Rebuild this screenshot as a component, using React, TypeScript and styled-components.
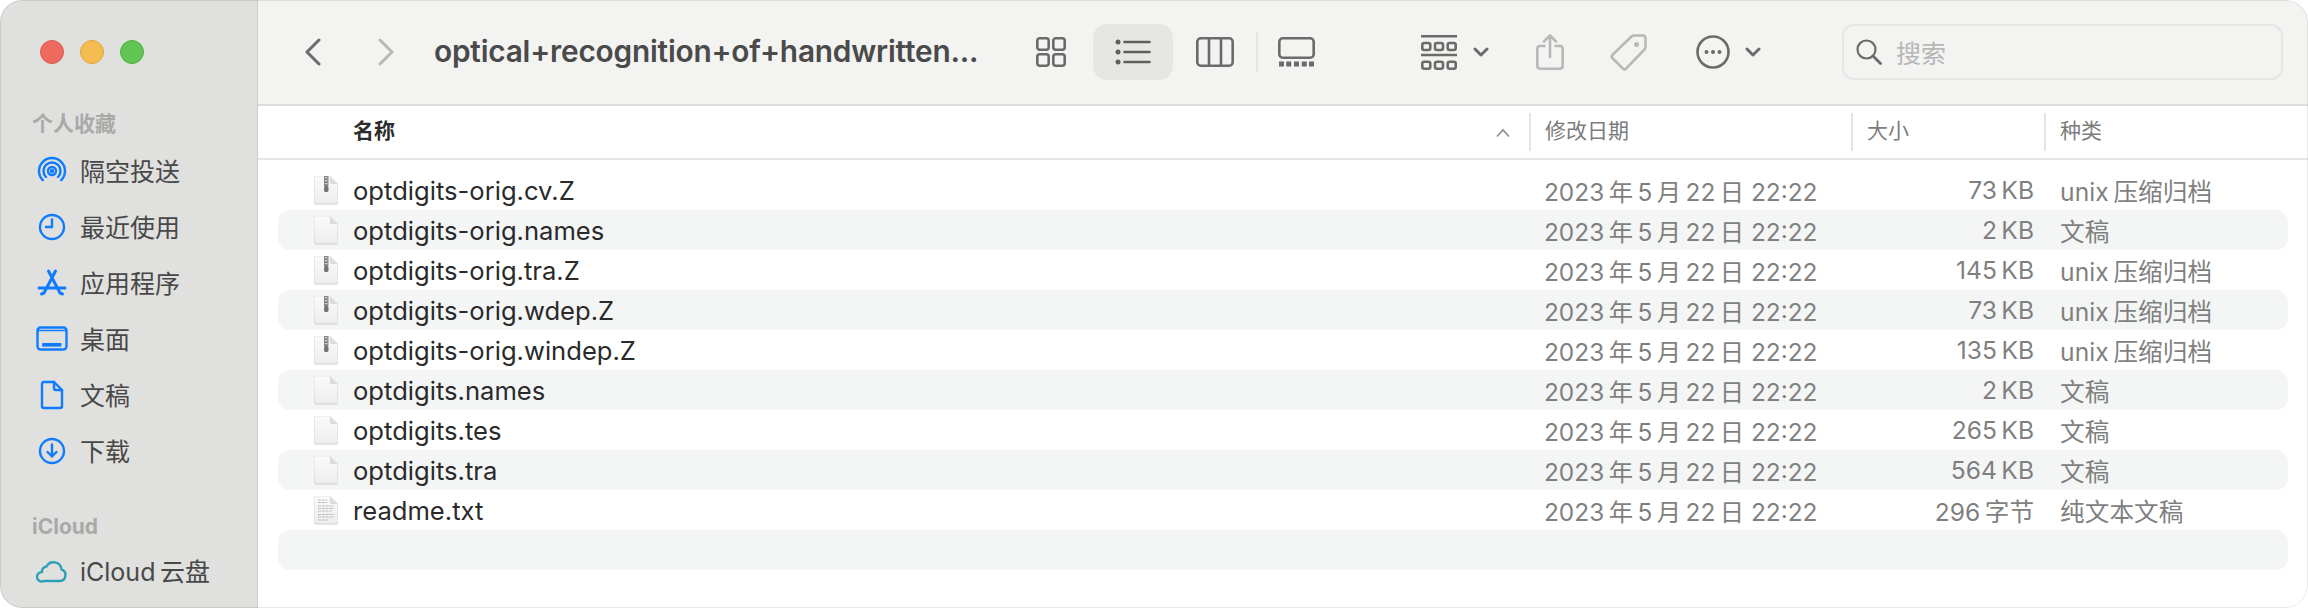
import React, { FunctionComponent, useId } from 'react';
import styled, { createGlobalStyle } from 'styled-components';

const latin = `Inter, 'Noto Sans CJK SC', sans-serif`;

const GlobalStyle = createGlobalStyle`
  html, body {
    margin: 0;
    padding: 0;
    background: #ffffff;
    overflow: hidden;
  }
`;

const FinderWindow = styled.div`
  width: 2308px;
  height: 608px;
  display: flex;
  position: relative;
  overflow: hidden;
  border-radius: 22px;
  background: #ffffff;
  font-family: ${latin};

  &::after {
    content: '';
    position: absolute;
    inset: 0;
    border-radius: 22px;
    border: 1px solid rgba(0, 0, 0, 0.09);
    pointer-events: none;
  }
`;

const Sidebar = styled.aside`
  width: 258px;
  flex: none;
  box-sizing: border-box;
  padding-top: 40px;
  background: #e0e0df;
  border-right: 1px solid #cdcdcc;
`;

const TrafficLights = styled.div`
  display: flex;
  gap: 16px;
  padding-left: 40px;
  margin-bottom: 43px;
`;

const Light = styled.span<{ $color: string; $edge: string }>`
  width: 24px;
  height: 24px;
  box-sizing: border-box;
  border-radius: 50%;
  background: ${(p) => p.$color};
  border: 1px solid ${(p) => p.$edge};
`;

const SectionLabel = styled.div<{ $top?: number; $bottom?: number }>`
  height: 34px;
  line-height: 34px;
  margin: ${(p) => p.$top ?? 0}px 0 ${(p) => p.$bottom ?? 0}px 32px;
  font-size: 21px;
  font-weight: 700;
  color: #a9a9a8;
`;

const NavItem = styled.div`
  height: 56px;
  box-sizing: border-box;
  display: flex;
  align-items: center;
  position: relative;
  padding: 0 0 5px 80px;
  font-size: 25px;
  color: #484848;
`;

const NavIcon = styled.svg`
  position: absolute;
  left: 36px;
  top: 11px;
  width: 32px;
  height: 32px;
  fill: none;
  stroke: ${(p) => p.color ?? '#0f7bff'};
  stroke-width: 2.4;
  stroke-linecap: round;
  stroke-linejoin: round;
`;

const Main = styled.main`
  flex: 1;
  min-width: 0;
`;

const Toolbar = styled.header`
  height: 106px;
  box-sizing: border-box;
  display: flex;
  align-items: center;
  padding-left: 47px;
  background: #f3f3f2;
  border-bottom: 2px solid #dedede;
`;

const ToolIcon = styled.svg<{ $gap?: number; $muted?: boolean }>`
  flex: none;
  margin-left: ${(p) => p.$gap ?? 0}px;
  fill: none;
  stroke: ${(p) => (p.$muted ? '#b8b8b7' : '#6b6b6a')};
  stroke-width: 2.6;
  stroke-linecap: round;
  stroke-linejoin: round;
`;

const Title = styled.h1`
  flex: none;
  width: 543px;
  margin: 0 0 2px 40px;
  font-size: 29.8px;
  font-weight: 600;
  color: #4a4a4a;
  white-space: nowrap;
  letter-spacing: -0.2px;
`;

const ActivePill = styled.div`
  flex: none;
  width: 80px;
  height: 56px;
  margin-left: 27px;
  border-radius: 14px;
  background: #e6e6e5;
  display: flex;
  align-items: center;
  justify-content: center;
`;

const ToolDivider = styled.span`
  flex: none;
  width: 2px;
  height: 40px;
  margin-left: 22px;
  background: #e3e3e2;
`;

const SearchBox = styled.div`
  flex: none;
  width: 441px;
  height: 56px;
  box-sizing: border-box;
  margin-left: 81px;
  display: flex;
  align-items: center;
  gap: 14px;
  padding-left: 12px;
  border: 2px solid #e6e6e5;
  border-radius: 12px;
  font-size: 25px;
  color: #b7b7b6;
`;

const HeaderRow = styled.div`
  height: 54px;
  box-sizing: border-box;
  display: grid;
  grid-template-columns: 1271px 322px 193px 1fr;
  align-items: center;
  border-bottom: 2px solid #e6e6e6;
  font-size: 21px;
  color: #7c7c7c;
`;

const HeaderCell = styled.div<{ $first?: boolean }>`
  height: 38px;
  line-height: 36px;
  box-sizing: border-box;
  position: relative;
  padding-left: ${(p) => (p.$first ? 95 : 14)}px;
  border-left: ${(p) => (p.$first ? 'none' : '2px solid #e5e5e5')};
  font-weight: ${(p) => (p.$first ? 600 : 400)};
  color: ${(p) => (p.$first ? '#2c2c2c' : '#7c7c7c')};
`;

const SortArrow = styled.svg`
  position: absolute;
  right: 18px;
  top: 15px;
  width: 16px;
  height: 10px;
  fill: none;
  stroke: #8a8a8a;
  stroke-width: 1.6;
`;

const FileList = styled.div`
  padding: 10px 20px 0;
`;

const FileRow = styled.div<{ $striped: boolean }>`
  height: 40px;
  display: grid;
  grid-template-columns: 1266px 301px 189px 1fr;
  align-items: center;
  border-radius: 12px;
  background: ${(p) => (p.$striped ? '#f4f5f5' : 'transparent')};
  font-size: 24.6px;
  color: #7f7f7f;
  white-space: nowrap;
`;

const NameCell = styled.div`
  display: flex;
  align-items: center;
  gap: 14px;
  padding-left: 35px;
  color: #2a2a2a;
  font-size: 25.6px;
`;

const DateCell = styled.div`
  font-size: 24.4px;
`;

const SizeCell = styled.div`
  text-align: right;
`;

const KindCell = styled.div`
  padding-left: 26px;
  letter-spacing: 0.1px;
`;

type FileKind = 'zip' | 'plain' | 'text';

const FileIcon: FunctionComponent<{ kind: FileKind }> = ({ kind }) => {
  const id = useId();
  return (
    <svg width='26' height='30' viewBox='0 0 26 30' style={{ flex: 'none' }}>
      <defs>
        <linearGradient id={id} x1='0' y1='0' x2='0' y2='1'>
          <stop offset='0' stopColor='#fbfbfb' />
          <stop offset='1' stopColor='#ededed' />
        </linearGradient>
      </defs>
      <path d='M1 2.5 Q1 1 2.5 1 H17 L25 9 V27.5 Q25 29.5 23 29.5 H3 Q1 29.5 1 27.5 Z' fill='#cfcfcf' />
      <path d='M1.4 2.5 Q1.4 1.2 2.6 1.2 H16.8 L24.6 9 V27 Q24.6 28.6 23 28.6 H3 Q1.4 28.6 1.4 27 Z' fill={`url(#${id})`} />
      <path d='M16.8 1.2 V7.6 Q16.8 9 18.2 9 H24.6 Z' fill='#dcdcdc' />
      {kind === 'zip' && (
        <g>
          <rect x='11' y='1' width='4.5' height='10' fill='#858585' />
          <rect x='12' y='2' width='2.5' height='1.2' fill='#d0d0d0' />
          <rect x='12' y='5' width='2.5' height='1.2' fill='#d0d0d0' />
          <rect x='12' y='8' width='2.5' height='1.2' fill='#d0d0d0' />
          <rect x='11' y='11' width='4.5' height='6' rx='1.4' fill='#747474' />
        </g>
      )}
      {kind === 'text' && (
        <g stroke='#bdbdbd' strokeWidth='1.2' strokeDasharray='3 0.8'>
          <path d='M5 5 H14 M5 7.5 H14 M5 11 H21 M5 13.5 H21 M5 16 H19 M5 19.5 H21 M5 22 H21 M5 25 H15' />
        </g>
      )}
    </svg>
  );
};

const KB = (n: number): string => `${n}\u2009KB`;
const archive = 'unix\u2009压缩归档';

const files: { name: string; kind: FileKind; size: string; type: string }[] = [
  { name: 'optdigits-orig.cv.Z', kind: 'zip', size: KB(73), type: archive },
  { name: 'optdigits-orig.names', kind: 'plain', size: KB(2), type: '文稿' },
  { name: 'optdigits-orig.tra.Z', kind: 'zip', size: KB(145), type: archive },
  { name: 'optdigits-orig.wdep.Z', kind: 'zip', size: KB(73), type: archive },
  { name: 'optdigits-orig.windep.Z', kind: 'zip', size: KB(135), type: archive },
  { name: 'optdigits.names', kind: 'plain', size: KB(2), type: '文稿' },
  { name: 'optdigits.tes', kind: 'plain', size: KB(265), type: '文稿' },
  { name: 'optdigits.tra', kind: 'plain', size: KB(564), type: '文稿' },
  { name: 'readme.txt', kind: 'text', size: '296\u2009字节', type: '纯文本文稿' },
];

const modified = '2023\u2009年\u20095\u2009月\u200922\u2009日 22:22';

const Chevron: FunctionComponent<{ gap: number }> = ({ gap }) => (
  <ToolIcon $gap={gap} width='16' height='10' viewBox='0 0 16 10' style={{ strokeWidth: 3 }}>
    <path d='M2 2 L8 8 L14 2' />
  </ToolIcon>
);

const App: FunctionComponent = (): JSX.Element => {
  return (
    <>
      <GlobalStyle />
      <FinderWindow>
        <Sidebar>
          <TrafficLights>
            <Light $color='#ee6a5f' $edge='#d95c52' />
            <Light $color='#f5bd4f' $edge='#dea540' />
            <Light $color='#61c554' $edge='#52ad47' />
          </TrafficLights>
          <SectionLabel $bottom={3}>个人收藏</SectionLabel>
          <NavItem>
            <NavIcon viewBox='0 0 32 32'>
              <path d='M6.8 25.2 A13 13 0 1 1 25.2 25.2' />
              <path d='M10 22 A8.5 8.5 0 1 1 22 22' />
              <circle cx='16' cy='16' r='4' />
              <circle cx='16' cy='16' r='1' fill='#0f7bff' />
            </NavIcon>
            隔空投送
          </NavItem>
          <NavItem>
            <NavIcon viewBox='0 0 32 32'>
              <circle cx='16' cy='16' r='12' />
              <path d='M16 8.5 V16 H10' />
            </NavIcon>
            最近使用
          </NavItem>
          <NavItem>
            <NavIcon viewBox='0 0 32 32' style={{ strokeWidth: 3 }}>
              <path d='M12.5 4 L24 26 M19.5 4 L8 26 M3 21 H29 M5.5 27 L8 26 M24 26 L26.5 27' />
            </NavIcon>
            应用程序
          </NavItem>
          <NavItem>
            <NavIcon viewBox='0 0 32 32'>
              <rect x='1.5' y='4.5' width='29' height='22' rx='3' />
              <path d='M2 7.5 H30' strokeWidth='1.4' />
              <rect x='7' y='20.5' width='18' height='2.6' fill='#0f7bff' strokeWidth='1' />
            </NavIcon>
            桌面
          </NavItem>
          <NavItem>
            <NavIcon viewBox='0 0 32 32'>
              <path d='M6 5 Q6 3 8 3 H18 L26 11 V27 Q26 29 24 29 H8 Q6 29 6 27 Z' />
              <path d='M18 3 V9 Q18 11 20 11 H26' />
            </NavIcon>
            文稿
          </NavItem>
          <NavItem>
            <NavIcon viewBox='0 0 32 32'>
              <circle cx='16' cy='16' r='12' />
              <path d='M16 9.5 V21.5 M11.5 17 L16 21.5 L20.5 17' />
            </NavIcon>
            下载
          </NavItem>
          <SectionLabel $top={30}>iCloud</SectionLabel>
          <NavItem>
            <NavIcon viewBox='0 0 32 32' color='#2aa0b8'>
              <path d='M8 26 H24 A6 6 0 0 0 25.5 14.4 A8 8 0 0 0 10.5 11.5 A5 5 0 0 0 6 17 A5 5 0 0 0 1 21.5 A4.8 4.8 0 0 0 8 26 Z' />
            </NavIcon>
            iCloud&#8201;云盘
          </NavItem>
        </Sidebar>
        <Main>
          <Toolbar>
            <ToolIcon width='16' height='28' viewBox='0 0 16 28' style={{ strokeWidth: 3 }}>
              <path d='M14 2 L2 14 L14 26' />
            </ToolIcon>
            <ToolIcon $gap={57} $muted width='16' height='28' viewBox='0 0 16 28' style={{ strokeWidth: 3 }}>
              <path d='M2 2 L14 14 L2 26' />
            </ToolIcon>
            <Title>optical+recognition+of+handwritten...</Title>
            <ToolIcon $gap={59} width='30' height='30' viewBox='0 0 30 30'>
              <rect x='1.3' y='1.3' width='11.4' height='11.4' rx='2.4' />
              <rect x='17.3' y='1.3' width='11.4' height='11.4' rx='2.4' />
              <rect x='1.3' y='17.3' width='11.4' height='11.4' rx='2.4' />
              <rect x='17.3' y='17.3' width='11.4' height='11.4' rx='2.4' />
            </ToolIcon>
            <ActivePill>
              <ToolIcon width='36' height='26' viewBox='0 0 36 26' style={{ stroke: '#5f5f5e' }}>
                <path d='M9.5 3 H34.5 M9.5 13 H34.5 M9.5 23 H34.5' />
                <circle cx='3' cy='3' r='1.2' fill='#5f5f5e' />
                <circle cx='3' cy='13' r='1.2' fill='#5f5f5e' />
                <circle cx='3' cy='23' r='1.2' fill='#5f5f5e' />
              </ToolIcon>
            </ActivePill>
            <ToolIcon $gap={23} width='38' height='30' viewBox='0 0 38 30'>
              <rect x='1.3' y='1.3' width='35.4' height='27.4' rx='3.5' />
              <path d='M13 1.3 V28.7 M25 1.3 V28.7' />
            </ToolIcon>
            <ToolDivider />
            <ToolIcon $gap={20} width='37' height='30' viewBox='0 0 37 30'>
              <rect x='1.3' y='1.3' width='34.4' height='19.4' rx='3.5' />
              <g fill='#6b6b6a' stroke='none'>
                <rect x='1' y='24.5' width='5' height='5' />
                <rect x='8.2' y='24.5' width='5' height='5' />
                <rect x='16' y='24.5' width='5' height='5' />
                <rect x='23.8' y='24.5' width='5' height='5' />
                <rect x='31' y='24.5' width='5' height='5' />
              </g>
            </ToolIcon>
            <ToolIcon $gap={106} width='36' height='35' viewBox='0 0 36 35'>
              <path d='M0.5 1.2 H35.5 M0.5 20 H35.5' />
              <rect x='1.3' y='8' width='8' height='7' rx='2' />
              <rect x='14' y='8' width='8' height='7' rx='2' />
              <rect x='26.7' y='8' width='8' height='7' rx='2' />
              <rect x='1.3' y='26.7' width='8' height='7' rx='2' />
              <rect x='14' y='26.7' width='8' height='7' rx='2' />
              <rect x='26.7' y='26.7' width='8' height='7' rx='2' />
            </ToolIcon>
            <Chevron gap={16} />
            <ToolIcon $gap={47} $muted width='28' height='36' viewBox='0 0 28 36'>
              <path d='M8.5 12 H4 Q1.3 12 1.3 14.7 V31.5 Q1.3 34.7 4.5 34.7 H23.5 Q26.7 34.7 26.7 31.5 V14.7 Q26.7 12 24 12 H19.5' />
              <path d='M14 23 V2 M8 7.5 L14 1.5 L20 7.5' />
            </ToolIcon>
            <ToolIcon $gap={46} $muted width='37' height='37' viewBox='0 0 37 37'>
              <path d='M2.3 21 L21.5 2.5 Q22.5 1.5 24 1.5 H32.5 Q35.5 1.5 35.5 4.5 V13 Q35.5 14.5 34.5 15.5 L16 34.7 Q14.5 36 13 34.7 L2.3 24 Q1 22.5 2.3 21 Z' />
              <circle cx='26.5' cy='10.5' r='1.2' fill='#b8b8b7' />
            </ToolIcon>
            <ToolIcon $gap={49} width='34' height='34' viewBox='0 0 34 34'>
              <circle cx='17' cy='17' r='15.5' />
              <g fill='#6b6b6a' stroke='none'>
                <circle cx='10.5' cy='17' r='2' />
                <circle cx='17' cy='17' r='2' />
                <circle cx='23.5' cy='17' r='2' />
              </g>
            </ToolIcon>
            <Chevron gap={15} />
            <SearchBox>
              <svg width='26' height='26' viewBox='0 0 26 26' fill='none' stroke='#6b6b6a' strokeWidth='2.2' strokeLinecap='round'>
                <circle cx='10.5' cy='10.5' r='9' />
                <path d='M17 17 L24.5 24.5' strokeWidth='2.8' />
              </svg>
              搜索
            </SearchBox>
          </Toolbar>
          <HeaderRow>
            <HeaderCell $first>
              名称
              <SortArrow viewBox='0 0 16 10'>
                <path d='M2 8.5 L8 2 L14 8.5' />
              </SortArrow>
            </HeaderCell>
            <HeaderCell>修改日期</HeaderCell>
            <HeaderCell>大小</HeaderCell>
            <HeaderCell>种类</HeaderCell>
          </HeaderRow>
          <FileList>
            {files.map((file, index) => (
              <FileRow key={file.name} $striped={index % 2 === 1}>
                <NameCell>
                  <FileIcon kind={file.kind} />
                  {file.name}
                </NameCell>
                <DateCell>{modified}</DateCell>
                <SizeCell>{file.size}</SizeCell>
                <KindCell>{file.type}</KindCell>
              </FileRow>
            ))}
            <FileRow $striped />
          </FileList>
        </Main>
      </FinderWindow>
    </>
  );
};

export default App;
